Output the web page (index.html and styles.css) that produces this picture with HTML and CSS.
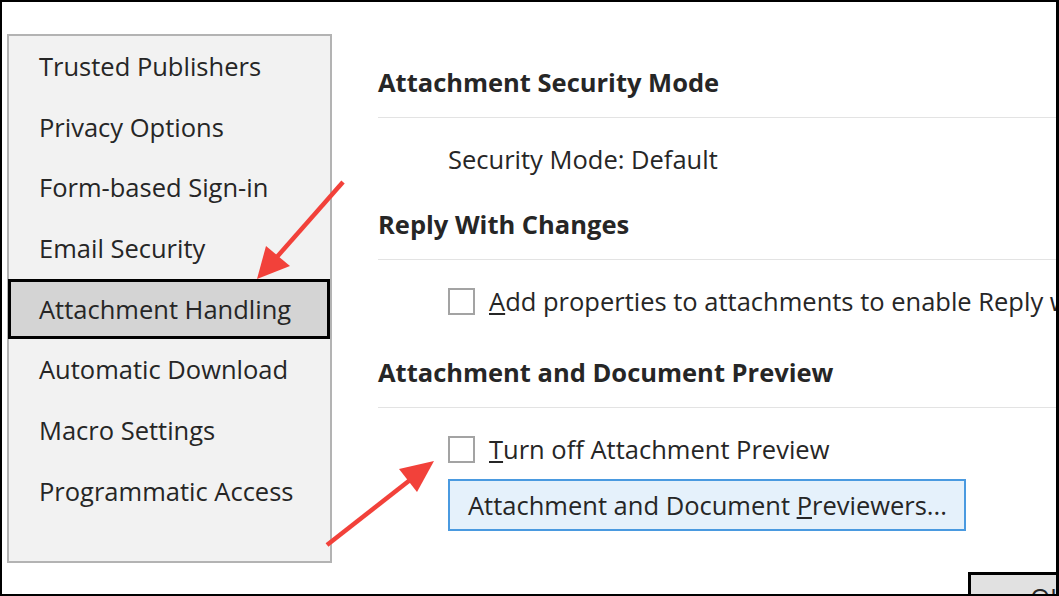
FILE: index.html
```html
<!DOCTYPE html>
<html lang="en">

<head>
    <meta charset="UTF-8">
    <meta name="viewport" content="width=device-width, initial-scale=1.0">
    <title>Trust Center - Attachment Handling</title>
    <link rel="stylesheet" href="styles.css">
</head>

<body>
    <div class="frame">
        <div class="layout">
            <!-- Trust Center categories -->
            <ul class="sidebar">
                <li class="nav-item">Trusted Publishers</li>
                <li class="nav-item">Privacy Options</li>
                <li class="nav-item">Form-based Sign-in</li>
                <li class="nav-item">Email Security</li>
                <li class="nav-item selected">Attachment Handling</li>
                <li class="nav-item">Automatic Download</li>
                <li class="nav-item">Macro Settings</li>
                <li class="nav-item">Programmatic Access</li>
            </ul>

            <div class="content">
                <div class="section section-first">
                    <h2 class="section-title">Attachment Security Mode</h2>
                    <div class="option">Security Mode: Default</div>
                </div>

                <div class="section section-second">
                    <h2 class="section-title">Reply With Changes</h2>
                    <label class="option">
                        <span class="checkbox"></span>
                        <span class="option-text"><u>A</u>dd properties to attachments to enable Reply with Changes</span>
                    </label>
                </div>

                <div class="section">
                    <h2 class="section-title">Attachment and Document Preview</h2>
                    <label class="option">
                        <span class="checkbox"></span>
                        <span class="option-text"><u>T</u>urn off Attachment Preview</span>
                    </label>
                    <button class="previewers-btn">Attachment and Document <u>P</u>reviewers...</button>
                </div>
            </div>
        </div>

        <div class="footer">
            <button class="ok-btn">OK</button>
        </div>
    </div>

    <!-- annotation arrows drawn over the dialog -->
    <svg class="arrows" width="1059" height="596" viewBox="0 0 1059 596">
        <line x1="343" y1="182" x2="276" y2="258" stroke="#f2413a" stroke-width="4.5" />
        <polygon points="257,279 266,246 290,266" fill="#f2413a" />
        <line x1="327" y1="545" x2="410" y2="480" stroke="#f2413a" stroke-width="4.5" />
        <polygon points="434,461 399,469 417,492" fill="#f2413a" />
    </svg>
</body>

</html>
```

FILE: styles.css
```css
body {
    margin: 0;
    background-color: #fff;
    font-family: "Open Sans", "Noto Sans", Arial, sans-serif;
    color: #262626;
}

/* Black outline round the whole screenshot */
.frame {
    width: 1059px;
    height: 596px;
    box-sizing: border-box;
    border-style: solid;
    border-color: #000;
    border-width: 2px 3px 2px 2px;
    overflow: hidden;
}

.layout {
    display: flex;
    align-items: flex-start;
}

/* Left category list */
.sidebar {
    list-style: none;
    margin: 32px 0 0 5px;
    padding: 0;
    width: 325px;
    height: 529px;
    box-sizing: border-box;
    border: 2px solid #b3b3b3;
    background-color: #f2f2f2;
    flex-shrink: 0;
}

.nav-item {
    height: 60.7px;
    line-height: 60px;
    padding-left: 30px;
    font-size: 25.5px;
    white-space: nowrap;
    box-sizing: border-box;
}

.nav-item.selected {
    margin-left: -1px;
    padding-left: 28px;
    line-height: 55px;
    border: 3px solid #000;
    background-color: #d4d4d4;
}

/* Right settings pane */
.content {
    flex: 1;
    min-width: 0;
    margin-left: 46px;
    padding-top: 45px;
}

.section-title {
    margin: 0;
    height: 70px;
    line-height: 70px;
    font-size: 25.5px;
    font-weight: bold;
    white-space: nowrap;
    border-bottom: 1px solid #e3e3e3;
}

.section-first {
    margin-bottom: 9px;
}

.section-second {
    margin-bottom: 15px;
}

.option {
    display: flex;
    align-items: center;
    margin: 20px 0 0 70px;
    height: 42px;
    font-size: 25.5px;
    white-space: nowrap;
}

.checkbox {
    width: 27px;
    height: 27px;
    box-sizing: border-box;
    border: 2px solid #a3a3a3;
    background-color: #fff;
    margin-right: 14px;
    flex-shrink: 0;
}

.previewers-btn {
    display: block;
    margin: 9px 0 0 70px;
    width: 518px;
    height: 52px;
    padding: 0 0 0 18px;
    text-align: left;
    border: 2px solid #4a9ae0;
    background-color: #e5f1fb;
    font-family: inherit;
    font-size: 25.5px;
    color: #262626;
    white-space: nowrap;
}

.footer {
    display: flex;
    justify-content: flex-end;
    margin-top: 9px;
    margin-right: -72px;
}

.ok-btn {
    width: 160px;
    height: 50px;
    border: 3px solid #000;
    background-color: #e1e1e1;
    font-family: inherit;
    font-size: 25.5px;
    color: #262626;
}

.arrows {
    position: absolute;
    left: 0;
    top: 0;
}
```
